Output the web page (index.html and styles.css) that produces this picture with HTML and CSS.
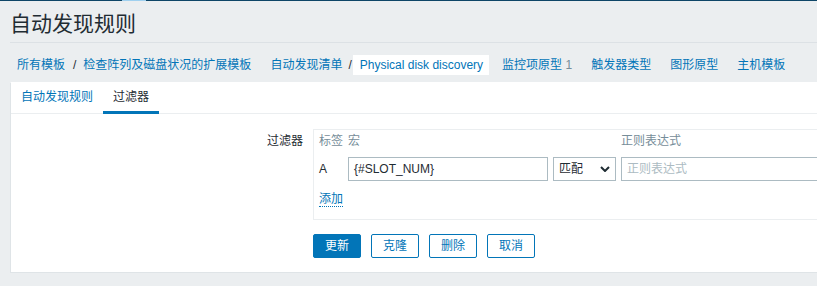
FILE: index.html
```html
<!DOCTYPE html>
<html lang="zh-CN">
<head>
<meta charset="utf-8">
<title>自动发现规则</title>
<link rel="stylesheet" href="styles.css">
</head>
<body>
<div class="topbar"><span class="topbar-active"></span></div>
<div class="wrapper">
  <header class="page-header"><h1>自动发现规则</h1></header>
  <nav class="breadcrumbs">
    <a class="crumb" href="#">所有模板</a>
    <span class="sep">/</span>
    <a class="crumb" href="#">检查阵列及磁盘状况的扩展模板</a>
    <a class="crumb group" href="#">自动发现清单</a>
    <span class="sep tight">/</span>
    <span class="crumb selected">Physical disk discovery</span>
    <a class="crumb item-1" href="#">监控项原型 <span class="count">1</span></a>
    <a class="crumb item-n" href="#">触发器类型</a>
    <a class="crumb item-n" href="#">图形原型</a>
    <a class="crumb item-n" href="#">主机模板</a>
  </nav>
  <main class="panel">
    <ul class="tabs">
      <li class="tab"><a href="#">自动发现规则</a></li>
      <li class="tab active">过滤器</li>
    </ul>
    <div class="tab-body">
      <div class="form-row">
        <label class="form-label">过滤器</label>
        <div class="filter-box">
          <div class="filter-head">
            <span class="c1">标签</span>
            <span class="c2">宏</span>
            <span class="c3"></span>
            <span class="c4">正则表达式</span>
          </div>
          <div class="filter-line">
            <span class="c1 letter">A</span>
            <div class="input c2">{#SLOT_NUM}</div>
            <div class="select c3">
              <span>匹配</span>
              <svg class="chev" width="10" height="6" viewBox="0 0 10 6"><path d="M1 1 L5 5 L9 1" fill="none" stroke="#1f2c33" stroke-width="2"/></svg>
            </div>
            <div class="input c4 placeholder">正则表达式</div>
          </div>
          <div class="filter-add"><a href="#" class="add-link">添加</a></div>
        </div>
      </div>
      <div class="buttons">
        <button class="btn primary">更新</button>
        <button class="btn">克隆</button>
        <button class="btn">删除</button>
        <button class="btn">取消</button>
      </div>
    </div>
  </main>
</div>
</body>
</html>
```
FILE: styles.css
```css
html, body {
  margin: 0;
  padding: 0;
  overflow: hidden;
  background: #ebeef0;
  font-family: "Liberation Sans", Arial, "Noto Sans CJK SC", sans-serif;
  font-size: 12px;
  color: #1f2c33;
}
a { color: #0275b8; text-decoration: none; }

.topbar {
  height: 1px;
  background: #0d4567;
  display: flex;
}
.topbar-active {
  margin-left: 122px;
  width: 24px;
  background: #9fd0ef;
}

.wrapper {
  width: 1100px;
}

.page-header {
  margin-left: 10px;
  height: 41px;
  border-bottom: 1px solid #dce1e5;
}
.page-header h1 {
  margin: 0;
  padding-top: 2px;
  font-size: 21px;
  font-weight: normal;
  line-height: 41px;
  height: 39px;
  color: #1f2c33;
}

.breadcrumbs {
  display: flex;
  align-items: center;
  height: 20px;
  padding: 12px 0 7px 17px;
  line-height: 20px;
}
.sep {
  color: #1f2c33;
  margin: 0 7px 0 8px;
}
.sep.tight {
  margin: 0 1px 0 6px;
}
.crumb.group { margin-left: 19px; }
.crumb.selected {
  background: #ffffff;
  color: #0275b8;
  height: 20px;
  padding: 0 6px 0 7px;
}
.crumb.item-1 { margin-left: 13px; }
.crumb.item-n { margin-left: 19px; }
.count { color: #768d99; }

.panel {
  margin-left: 10px;
  background: #ffffff;
  border: 1px solid #dfe4e7;
  border-top-color: #ffffff;
}

.tabs {
  list-style: none;
  margin: 0;
  padding: 0;
  display: flex;
  height: 30px;
  border-bottom: 1px solid #ebeef0;
}
.tab {
  padding: 0 10px;
  height: 28px;
  line-height: 28px;
  border-bottom: 3px solid transparent;
}
.tab.active {
  border-bottom-color: #0275b8;
  color: #1f2c33;
}

.tab-body {
  padding: 15px 0 14px 0;
}

.form-row {
  display: flex;
  gap: 10px;
}
.form-label {
  flex: none;
  width: 292px;
  text-align: right;
  line-height: 24px;
}
.filter-box {
  flex: none;
  border: 1px solid #ebeef0;
  padding: 4px 5px 12px 5px;
  width: 640px;
}
.filter-head, .filter-line {
  display: flex;
  gap: 5px;
}
.filter-head {
  line-height: 14px;
  height: 14px;
  color: #768d99;
}
.c1, .c2, .c3, .c4 { flex: none; }
.c1 { width: 24px; }
.c2 { width: 200px; }
.c3 { width: 63px; }
.c4 { width: 300px; }
.filter-line {
  margin-top: 9px;
  height: 24px;
  align-items: center;
}
.letter { line-height: 24px; }
.input, .select {
  box-sizing: border-box;
  height: 24px;
  line-height: 22px;
  border: 1px solid #acbbc2;
  padding: 0 5px;
  background: #fff;
}
.placeholder { color: #acbbc2; }
.select {
  display: flex;
  align-items: center;
  justify-content: space-between;
}
.filter-add {
  margin-top: 11px;
  line-height: 14px;
  height: 15px;
}
.add-link {
  border-bottom: 1px dotted #0275b8;
}

.buttons {
  display: flex;
  gap: 10px;
  margin: 14px 0 0 302px;
}
.btn {
  box-sizing: border-box;
  width: 48px;
  height: 24px;
  padding: 0;
  border: 1px solid #0275b8;
  border-radius: 2px;
  background: #ffffff;
  color: #0275b8;
  font-family: inherit;
  font-size: 12px;
  line-height: 22px;
}
.btn.primary {
  background: #0275b8;
  color: #ffffff;
}
```
